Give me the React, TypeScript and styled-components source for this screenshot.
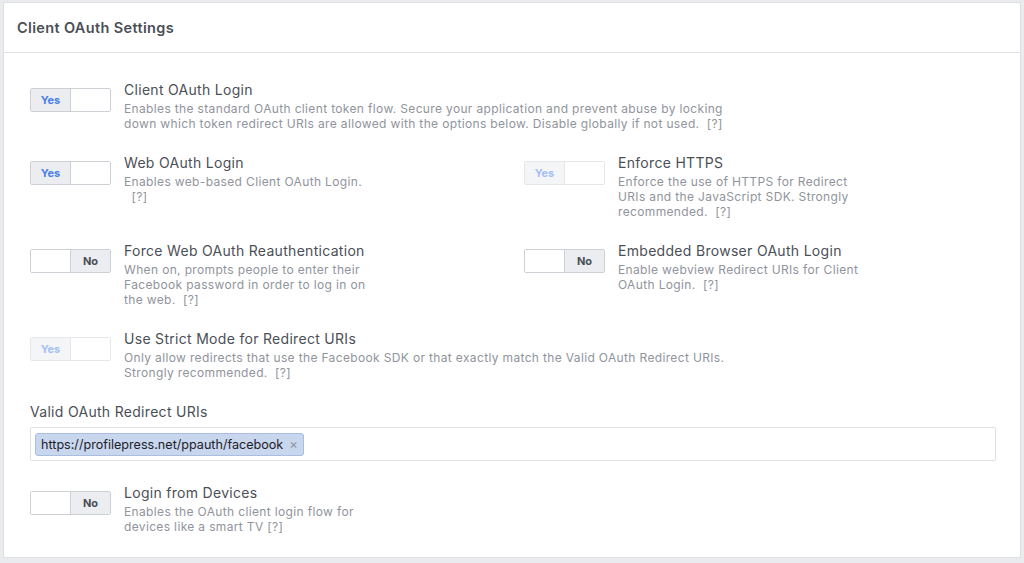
import React from 'react';
import styled, { createGlobalStyle, css } from 'styled-components';

const GlobalStyle = createGlobalStyle`
    html, body {
        margin: 0;
        padding: 0;
        background: #e9ebee;
    }
    body {
        font-family: Inter, "Liberation Sans", Arial, sans-serif;
        -webkit-font-smoothing: antialiased;
    }
`;

const Page = styled.div`
    padding: 2px 3px 0 3px;
    width: 1018px;
`;

const Card = styled.div`
    background: #ffffff;
    border: 1px solid #dddfe2;
    border-radius: 2px;
    height: 556px;
    box-sizing: border-box;
`;

const CardHeader = styled.div`
    border-bottom: 1px solid #dddfe2;
    height: 49px;
    display: flex;
    align-items: center;
    padding: 0 13px;
`;

const CardTitle = styled.h2`
    margin: 0;
    font-size: 14.5px;
    font-weight: 600;
    color: #4b4f56;
    letter-spacing: 0.35px;
`;

const CardBody = styled.div`
    display: flex;
    flex-direction: column;
    gap: 22px;
    padding: 27px 24px 24px 26px;
`;

const TwoColumns = styled.div`
    display: grid;
    grid-template-columns: 494px 1fr;
`;

const SettingRow = styled.div`
    display: flex;
    align-items: flex-start;
`;

const Toggle = styled.div<{ $disabled?: boolean }>`
    display: flex;
    width: 81px;
    height: 24px;
    margin-top: 8px;
    margin-right: 13px;
    flex-shrink: 0;
    box-sizing: border-box;
    border: 1px solid #ccd0d5;
    border-radius: 2px;
    overflow: hidden;
    ${p => p.$disabled && css`
        opacity: 0.5;
    `}
`;

const Segment = styled.div<{ $active?: boolean; $on?: boolean }>`
    flex: 1;
    display: flex;
    align-items: center;
    justify-content: center;
    font-size: 11px;
    font-weight: 700;
    background: ${p => (p.$active ? '#ebedf0' : '#ffffff')};
    color: ${p => (p.$on ? '#4a80e8' : '#4b4f56')};
    & + & {
        border-left: 1px solid #ccd0d5;
    }
`;

const SettingText = styled.div`
    display: flex;
    flex-direction: column;
`;

const SettingTitle = styled.div`
    font-size: 14px;
    line-height: 20px;
    letter-spacing: 0.3px;
    color: #4b4f56;
    margin-bottom: 1px;
`;

const SettingDesc = styled.div`
    font-size: 12px;
    line-height: 15px;
    letter-spacing: 0.35px;
    color: #90949c;
    white-space: pre;
`;

const FieldLabel = styled.div`
    font-size: 14px;
    line-height: 20px;
    letter-spacing: 0.3px;
    color: #4b4f56;
`;

const FieldBlock = styled.div`
    display: flex;
    flex-direction: column;
    gap: 5px;
`;

const TokenInput = styled.div`
    display: flex;
    align-items: center;
    height: 34px;
    box-sizing: border-box;
    border: 1px solid #dddfe2;
    border-radius: 2px;
    padding: 0 4px;
`;

const Token = styled.span`
    display: inline-flex;
    align-items: center;
    height: 23px;
    box-sizing: border-box;
    padding: 0 5px;
    background: #c9d7ee;
    border: 1px solid #a9bedf;
    border-radius: 3px;
    font-size: 12.6px;
    color: #1d2129;
`;

const TokenRemove = styled.span`
    margin-left: 6px;
    color: #8d949e;
    font-size: 13px;
`;

type SettingProps = {
    title: string;
    lines: string[];
    value: boolean;
    disabled?: boolean;
};

const Setting: React.FC<SettingProps> = ({ title, lines, value, disabled }) => (
    <SettingRow>
        <Toggle $disabled={disabled}>
            <Segment $active={value} $on>{value ? 'Yes' : ''}</Segment>
            <Segment $active={!value}>{value ? '' : 'No'}</Segment>
        </Toggle>
        <SettingText>
            <SettingTitle>{title}</SettingTitle>
            {lines.map((l, i) => (
                <SettingDesc key={i}>{l}</SettingDesc>
            ))}
        </SettingText>
    </SettingRow>
);

export default function App() {
    return (
        <Page>
            <GlobalStyle />
            <Card>
                <CardHeader>
                    <CardTitle>Client OAuth Settings</CardTitle>
                </CardHeader>
                <CardBody>
                    <Setting
                        title="Client OAuth Login"
                        value
                        lines={[
                            'Enables the standard OAuth client token flow. Secure your application and prevent abuse by locking',
                            'down which token redirect URIs are allowed with the options below. Disable globally if not used.  [?]',
                        ]}
                    />
                    <TwoColumns>
                        <Setting
                            title="Web OAuth Login"
                            value
                            lines={['Enables web-based Client OAuth Login.', '  [?]']}
                        />
                        <Setting
                            title="Enforce HTTPS"
                            value
                            disabled
                            lines={[
                                'Enforce the use of HTTPS for Redirect',
                                'URIs and the JavaScript SDK. Strongly',
                                'recommended.  [?]',
                            ]}
                        />
                    </TwoColumns>
                    <TwoColumns>
                        <Setting
                            title="Force Web OAuth Reauthentication"
                            value={false}
                            lines={[
                                'When on, prompts people to enter their',
                                'Facebook password in order to log in on',
                                'the web.  [?]',
                            ]}
                        />
                        <Setting
                            title="Embedded Browser OAuth Login"
                            value={false}
                            lines={['Enable webview Redirect URIs for Client', 'OAuth Login.  [?]']}
                        />
                    </TwoColumns>
                    <Setting
                        title="Use Strict Mode for Redirect URIs"
                        value
                        disabled
                        lines={[
                            'Only allow redirects that use the Facebook SDK or that exactly match the Valid OAuth Redirect URIs.',
                            'Strongly recommended.  [?]',
                        ]}
                    />
                    <FieldBlock>
                        <FieldLabel>Valid OAuth Redirect URIs</FieldLabel>
                        <TokenInput>
                            <Token>
                                https://profilepress.net/ppauth/facebook
                                <TokenRemove>×</TokenRemove>
                            </Token>
                        </TokenInput>
                    </FieldBlock>
                    <Setting
                        title="Login from Devices"
                        value={false}
                        lines={['Enables the OAuth client login flow for', 'devices like a smart TV [?]']}
                    />
                </CardBody>
            </Card>
        </Page>
    );
}
